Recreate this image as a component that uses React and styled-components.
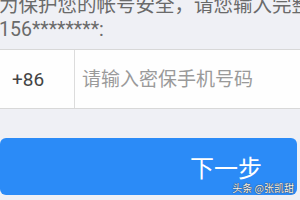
import React from "react";
import styled, { createGlobalStyle } from "styled-components";

const Global = createGlobalStyle`
  html, body {
    margin: 0;
    padding: 0;
    background: #eff0f5;
  }
  body {
    width: 300px;
    height: 200px;
    overflow: hidden;
    font-family: Roboto, "Noto Sans CJK SC", sans-serif;
  }
`;

const Page = styled.div`
  position: relative;
  width: 300px;
  height: 200px;
  overflow: hidden;
  display: flex;
  flex-direction: column;
`;

const Notice = styled.p`
  margin: -6px 0 0 -1px;
  height: 48px;
  font-size: 19.5px;
  line-height: 24px;
  color: #6a6a6a;
  white-space: nowrap;
`;

const Field = styled.div`
  margin-top: 7px;
  height: 58px;
  display: flex;
  align-items: stretch;
  background: #fefefe;
  border-top: 1px solid #d8d8d8;
  border-bottom: 1px solid #d8d8d8;
`;

const Prefix = styled.div`
  width: 62px;
  padding-left: 12px;
  display: flex;
  align-items: center;
  font-size: 19px;
  color: #444;
  border-right: 1.5px solid #dcdcdc;
`;

const Input = styled.input`
  flex: 1;
  min-width: 0;
  border: none;
  outline: none;
  background: transparent;
  padding: 0 0 0 7px;
  font-family: Roboto, "Noto Sans CJK SC", sans-serif;
  font-size: 19px;
  color: #333;

  &::placeholder {
    color: #9a9a9a;
  }
`;

const NextButton = styled.button`
  margin-top: 29px;
  flex-shrink: 0;
  width: 297px;
  height: 57px;
  border: none;
  border-radius: 6px;
  background: #2b8bf7;
  color: #fff;
  font-family: "Noto Sans CJK SC", sans-serif;
  font-size: 24px;
  text-align: left;
  padding: 0 0 0 190px;
`;

const Watermark = styled.span`
  position: absolute;
  right: 6px;
  bottom: 7px;
  font-family: "Noto Sans CJK SC", sans-serif;
  font-size: 10px;
  line-height: 10px;
  color: #f4f4f4;
  text-shadow: 0 0 1px #333, 0 0 1px #333;
`;

export default function App() {
  return (
    <>
      <Global />
      <Page>
        <Notice>
          为保护您的帐号安全，请您输入完整
          <br />
          156********:
        </Notice>
        <Field>
          <Prefix>+86</Prefix>
          <Input placeholder="请输入密保手机号码" />
        </Field>
        <NextButton>下一步</NextButton>
        <Watermark>头条 @张凯甜</Watermark>
      </Page>
    </>
  );
}
